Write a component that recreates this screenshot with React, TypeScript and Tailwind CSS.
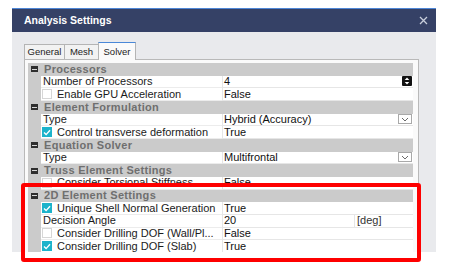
import React from "react";

type Row =
  | { kind: "head"; label: string }
  | {
      kind: "item";
      name: string;
      value: string;
      check?: boolean;
      extra?: "spin" | "drop";
      unit?: string;
    };

const ROWS: Row[] = [
  { kind: "head", label: "Processors" },
  { kind: "item", name: "Number of Processors", value: "4", extra: "spin" },
  { kind: "item", name: "Enable GPU Acceleration", value: "False", check: false },
  { kind: "head", label: "Element Formulation" },
  { kind: "item", name: "Type", value: "Hybrid (Accuracy)", extra: "drop" },
  { kind: "item", name: "Control transverse deformation", value: "True", check: true },
  { kind: "head", label: "Equation Solver" },
  { kind: "item", name: "Type", value: "Multifrontal", extra: "drop" },
  { kind: "head", label: "Truss Element Settings" },
  { kind: "item", name: "Consider Torsional Stiffness", value: "False", check: false },
  { kind: "head", label: "2D Element Settings" },
  { kind: "item", name: "Unique Shell Normal Generation", value: "True", check: true },
  { kind: "item", name: "Decision Angle", value: "20", unit: "[deg]" },
  { kind: "item", name: "Consider Drilling DOF (Wall/Pl...", value: "False", check: false },
  { kind: "item", name: "Consider Drilling DOF (Slab)", value: "True", check: true },
];

function CheckBox({ on }: { on: boolean }) {
  if (on)
    return (
      <div className="w-[10px] h-[10px] bg-[#1db3cb] flex items-center justify-center shrink-0">
        <svg width="8" height="7" viewBox="0 0 8 7">
          <polyline points="1,3.6 3.1,5.6 7,1.3" fill="none" stroke="#fff" strokeWidth="1.4" />
        </svg>
      </div>
    );
  return <div className="w-[10px] h-[10px] bg-white border border-[#d6d6d6] shrink-0" />;
}

function Spinner() {
  return (
    <svg width="10" height="10" viewBox="0 0 10 10" className="shrink-0">
      <rect width="10" height="10" rx="1" fill="#111" />
      <polygon points="5,1.6 7.3,4 2.7,4" fill="#fff" />
      <polygon points="5,8.4 7.3,6 2.7,6" fill="#fff" />
    </svg>
  );
}

function DropButton() {
  return (
    <div className="w-[14px] h-[10px] border border-[#a9a9a9] bg-white flex items-center justify-center shrink-0">
      <svg width="8" height="5" viewBox="0 0 8 5">
        <polyline points="1,1 4,4 7,1" fill="none" stroke="#6a6a6a" strokeWidth="1" />
      </svg>
    </div>
  );
}

function GridRow({ row }: { row: Row }) {
  if (row.kind === "head") {
    return (
      <div className="flex items-center h-[12.67px] bg-[#cbcbcb]">
        <div className="w-[13px] flex items-center justify-center">
          <div className="w-[7px] h-[6px] bg-[#2f2f2f] flex items-center justify-center">
            <div className="w-[5px] h-px bg-[#d8d8d8]" />
          </div>
        </div>
        <span className="pl-[3px] text-[11px] leading-none font-bold tracking-[0.3px] text-[#6f6f6f]">
          {row.label}
        </span>
      </div>
    );
  }
  return (
    <div className="flex h-[12.67px]">
      <div className="w-[13px] bg-[#cbcbcb] shrink-0" />
      <div className="w-[181px] shrink-0 flex items-center bg-white border-b border-[#ececec] pl-[1px] gap-[5px] overflow-hidden">
        {row.check !== undefined ? <CheckBox on={row.check} /> : null}
        <span className={`text-[11px] leading-none text-[#1b1b1b] whitespace-nowrap ${row.check === undefined ? "pl-[1px]" : ""}`}>
          {row.name}
        </span>
      </div>
      <div className="flex-1 flex items-center bg-white border-l border-b border-[#e6e6e6] pr-[1px]">
        {row.unit ? (
          <>
            <div className="w-[131px] h-full flex items-center pl-[1px] text-[11px] leading-none text-[#111]">
              {row.value}
            </div>
            <div className="h-full flex items-center border-l border-[#e6e6e6] pl-[2px] text-[11px] leading-none text-[#333]">
              {row.unit}
            </div>
          </>
        ) : (
          <>
            <span className="flex-1 pl-[1px] text-[11px] leading-none text-[#111]">{row.value}</span>
            {row.extra === "spin" ? <Spinner /> : null}
            {row.extra === "drop" ? <DropButton /> : null}
          </>
        )}
      </div>
    </div>
  );
}

export default function App() {
  return (
    <div className="relative w-[450px] h-[271px] bg-white overflow-hidden font-['Liberation_Sans',Arial,sans-serif]">
      <div className="pt-[8px] pl-[12px]">
        <div className="w-[424px] h-[244px] bg-[#e9eaed] flex flex-col overflow-hidden">
          <div className="h-[24px] shrink-0 bg-[#354166] border-t border-[#4d86d6] flex items-center justify-between pl-[12px] pr-[8px]">
            <span className="text-white font-bold text-[10.5px] leading-none">Analysis Settings</span>
            <svg width="9" height="9" viewBox="0 0 9 9">
              <path d="M1 1 L8 8 M8 1 L1 8" stroke="#c9cfdc" strokeWidth="1.3" />
            </svg>
          </div>
          <div className="pl-[12px] pt-[10px]">
            <div className="flex items-end h-[17px] relative z-10">
              <div className="h-[15px] w-[41px] bg-[#f2f2f2] border border-b-0 border-[#b4b4b4] flex items-center justify-center text-[9.5px] text-[#222] leading-none">
                General
              </div>
              <div className="h-[15px] w-[35px] -ml-px bg-[#f2f2f2] border border-b-0 border-[#b4b4b4] flex items-center justify-center text-[9.5px] text-[#222] leading-none">
                Mesh
              </div>
              <div className="h-[18px] w-[38px] -ml-px -mb-px bg-[#fafafa] border border-b-0 border-[#b4b4b4] border-t-[#4a88d8] flex items-center justify-center text-[9.5px] text-[#222] leading-none">
                Solver
              </div>
            </div>
            <div className="w-[395px] h-[200px] bg-[#fafafa] border border-[#b9b9b9] pl-[3px] pt-[3px]">
              <div className="w-[385px] flex flex-col">
                {ROWS.map((r, i) => (
                  <GridRow key={i} row={r} />
                ))}
              </div>
            </div>
          </div>
        </div>
      </div>
      <div className="absolute left-[21px] top-[183px] w-[400px] h-[79px] border-[4px] border-[#fe0000] rounded-[3px]" />
    </div>
  );
}
